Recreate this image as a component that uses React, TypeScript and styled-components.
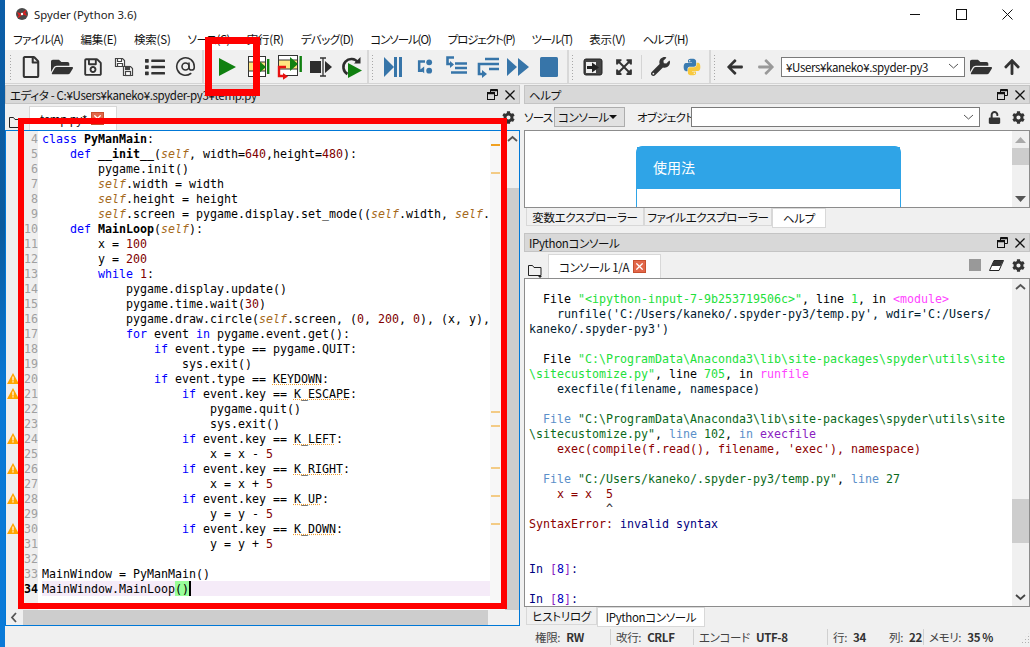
import React from 'react';
import styled, { createGlobalStyle } from 'styled-components';
import { AtSign } from 'lucide-react';
import {
  FaRegFile,
  FaFolderOpen,
  FaRegSave,
  FaList,
  FaExpandArrowsAlt,
  FaWrench,
  FaArrowLeft,
  FaArrowRight,
  FaArrowUp,
  FaUnlock,
  FaCog,
} from 'react-icons/fa';

const UI_FONT = `"Noto Sans CJK JP", "Noto Sans", sans-serif`;
const MONO_FONT = `"DejaVu Sans Mono", "Liberation Mono", monospace`;
const BLUE = '#3775a9';
const DARK = '#333333';

const GlobalStyle = createGlobalStyle`
  html, body {
    margin: 0;
    padding: 0;
    width: 1030px;
    height: 647px;
    overflow: hidden;
    background: #f0f0f0;
  }
`;

const Page = styled.div`
  position: relative;
  display: flex;
  width: 1030px;
  height: 647px;
  overflow: hidden;
  font-family: ${UI_FONT};
  font-size: 11.5px;
  letter-spacing: -0.35px;
  font-feature-settings: 'palt';
  white-space: nowrap;
  color: #111;
`;

const Desktop = styled.div`
  width: 5px;
  background: linear-gradient(#0c5ea8 0%, #0a5a9e 35%, #0a78d4 60%, #0a7ad8 100%);
`;

const Win = styled.div`
  flex: 1;
  display: flex;
  flex-direction: column;
  min-width: 0;
  background: #f0f0f0;
`;

const TitleBar = styled.div`
  height: 28px;
  display: flex;
  align-items: center;
  background: #fff;
  padding-left: 10px;
`;

const TitleText = styled.span`
  margin-left: 5px;
  flex: 1;
  font-family: 'Noto Sans', sans-serif;
  font-size: 11.3px;
  letter-spacing: 0;
  color: #222;
`;

const Caption = styled.div`
  width: 46px;
  height: 28px;
  display: flex;
  align-items: center;
  justify-content: center;
`;

const MenuBar = styled.div`
  height: 22px;
  display: flex;
  align-items: center;
  background: #fff;
  padding-left: 8px;
  gap: 17px;
`;

const MenuItem = styled.span<{ $ls: number }>`
  letter-spacing: ${(p) => p.$ls}px;
`;

const ToolBar = styled.div`
  height: 33px;
  display: flex;
  align-items: center;
  padding-left: 2px;
  border-bottom: 1px solid #d4d4d4;
`;

const ToolGroup = styled.div<{ $w?: number }>`
  display: flex;
  align-items: center;
  height: 100%;
  box-sizing: border-box;
  width: ${(p) => (p.$w ? `${p.$w}px` : 'auto')};
  flex: ${(p) => (p.$w ? 'none' : 1)};
  border-right: ${(p) => (p.$w ? '2px solid #d8d8d8' : 'none')};
`;

const Grip = styled.div`
  width: 3px;
  height: 26px;
  margin: 0 3px 0 2px;
  background-image: radial-gradient(#a8a8a8 0.8px, transparent 1px);
  background-size: 3px 3px;
`;

const ToolSlot = styled.div<{ $w?: number }>`
  width: ${(p) => p.$w ?? 31}px;
  height: 30px;
  display: flex;
  align-items: center;
  justify-content: center;
  color: ${DARK};
  flex: none;
`;

const ToolSep = styled.div`
  width: 1px;
  height: 24px;
  margin: 0 3px 0 2px;
  background: #d4d4d4;
`;

const PathCombo = styled.div`
  width: 184px;
  height: 20px;
  box-sizing: border-box;
  display: flex;
  align-items: center;
  justify-content: space-between;
  padding: 0 5px 0 4px;
  border: 1px solid #7a7a7a;
  background: #fff;
  flex: none;
`;

const Panes = styled.div`
  flex: 1;
  min-height: 0;
  display: flex;
  gap: 4px;
`;

const LeftCol = styled.div`
  width: 515px;
  display: flex;
  flex-direction: column;
  padding: 1px 0;
  box-sizing: border-box;
`;

const RightCol = styled.div`
  flex: 1;
  min-width: 0;
  display: flex;
  flex-direction: column;
  padding-top: 1px;
`;

const DockHeader = styled.div`
  height: 19px;
  flex: none;
  box-sizing: border-box;
  display: flex;
  align-items: center;
  justify-content: space-between;
  padding: 0 4px 0 4px;
  background: #d8d8d8;
  border: 1px solid #c4c4c4;
`;

const DockButtons = styled.div`
  display: flex;
  align-items: center;
  gap: 7px;
`;

const TabRow = styled.div`
  height: 26px;
  flex: none;
  display: flex;
  align-items: flex-end;
  padding-left: 4px;
  gap: 5px;
`;

const TabActions = styled.div`
  margin-left: auto;
  align-self: center;
  display: flex;
  align-items: center;
  gap: 8px;
  padding-right: 5px;
`;

const TopTab = styled.div<{ $w: number }>`
  width: ${(p) => p.$w}px;
  height: 24px;
  box-sizing: border-box;
  display: flex;
  align-items: center;
  gap: 4px;
  padding-left: 10px;
  background: #fff;
  border: 1px solid #d8d8d8;
  border-bottom: none;
`;

const CloseBadge = styled.span`
  width: 13px;
  height: 13px;
  box-sizing: border-box;
  display: inline-flex;
  align-items: center;
  justify-content: center;
  background: #e2674a;
  border: 1px solid #c8502f;
`;

const Editor = styled.div`
  flex: 1;
  min-height: 0;
  display: flex;
  flex-direction: column;
  border: 1px solid #0078d7;
  background: #fff;
`;

const EditorTop = styled.div`
  flex: 1;
  min-height: 0;
  display: flex;
`;

const CodeList = styled.div`
  flex: 1;
  min-width: 0;
  display: flex;
  flex-direction: column;
  font-family: ${MONO_FONT};
  font-size: 11.63px;
  letter-spacing: 0;
  font-feature-settings: normal;
  line-height: 17px;
  color: #000;
`;

const CodeRow = styled.div`
  height: 15px;
  flex: none;
  display: flex;
`;

const FillerRow = styled.div`
  flex: 1;
  display: flex;
`;

const Gutter = styled.div`
  width: 32px;
  flex: none;
  display: flex;
  align-items: flex-start;
  justify-content: flex-end;
  background: #efefef;
  position: relative;
`;

const WarnIcon = styled.svg`
  position: absolute;
  left: 1px;
  top: 2px;
`;

const LineNo = styled.span<{ $current?: boolean }>`
  color: ${(p) => (p.$current ? '#000' : '#a0a0a0')};
  font-weight: ${(p) => (p.$current ? 700 : 400)};
`;

const CodeText = styled.div<{ $current?: boolean }>`
  flex: 1;
  min-width: 0;
  margin-left: 4px;
  overflow: hidden;
  white-space: pre;
  background: ${(p) => (p.$current ? '#f5ebf8' : 'transparent')};
`;

const Kw = styled.span`
  color: #0000ff;
`;

const SelfWord = styled.span`
  color: #a5691c;
  font-style: italic;
`;

const NumWord = styled.span`
  color: #800000;
`;

const DefName = styled.span`
  font-weight: 700;
`;

const Unresolved = styled.span`
  text-decoration: underline dotted #f0a030;
`;

const Bracket = styled.span`
  display: inline-block;
  height: 15px;
  line-height: 17px;
  vertical-align: top;
  background: #99ff99;
`;

const Cursor = styled.span`
  display: inline-block;
  width: 2px;
  height: 15px;
  background: #000;
  vertical-align: top;
`;

const FlagArea = styled.div`
  position: relative;
  width: 15px;
  flex: none;
  background: #f7f7f7;
`;

const FlagMark = styled.div<{ $top: number; $thick?: boolean }>`
  position: absolute;
  left: 1px;
  width: 9px;
  top: ${(p) => p.$top}px;
  height: 2px;
  background: ${(p) => (p.$thick ? '#f0a020' : '#f3cb85')};
`;

const VScroll = styled.div`
  width: 14px;
  flex: none;
  display: flex;
  flex-direction: column;
  align-items: center;
  background: #f0f0f0;
`;

const ScrollEnd = styled.div`
  height: 17px;
  flex: none;
  display: flex;
  align-items: center;
  justify-content: center;
`;

const VThumb = styled.div<{ $h?: number; $mt: number }>`
  width: 100%;
  margin-top: ${(p) => p.$mt}px;
  background: #cdcdcd;
  flex: ${(p) => (p.$h ? 'none' : 1)};
  height: ${(p) => (p.$h ? `${p.$h}px` : 'auto')};
`;

const VSpacer = styled.div`
  flex: 1;
`;

const HScroll = styled.div`
  height: 15px;
  flex: none;
  display: flex;
  align-items: center;
  background: #f0f0f0;
`;

const HEnd = styled.div`
  width: 17px;
  height: 100%;
  display: flex;
  align-items: center;
  justify-content: center;
`;

const HThumb = styled.div`
  width: 465px;
  height: 100%;
  background: #cdcdcd;
`;

const HelpTools = styled.div`
  height: 26px;
  flex: none;
  display: flex;
  align-items: center;
`;

const HelpLabel = styled.span<{ $ml?: number; $w: number }>`
  margin-left: ${(p) => p.$ml ?? 0}px;
  width: ${(p) => p.$w}px;
  flex: none;
  letter-spacing: -0.7px;
`;

const SourceCombo = styled.div`
  width: 71px;
  height: 20px;
  margin-left: 2px;
  flex: none;
  box-sizing: border-box;
  display: flex;
  align-items: center;
  justify-content: space-between;
  padding: 0 8px 0 3px;
  background: #e1e1e1;
  border: 1px solid #adadad;
`;

const TriDown = styled.span`
  width: 0;
  height: 0;
  border-left: 4px solid transparent;
  border-right: 4px solid transparent;
  border-top: 4px solid #111;
`;

const ObjectCombo = styled.div`
  width: 289px;
  height: 20px;
  margin-left: 3px;
  flex: none;
  box-sizing: border-box;
  display: flex;
  align-items: center;
  justify-content: flex-end;
  padding-right: 5px;
  background: #fff;
  border: 1px solid #7a7a7a;
`;

const HelpIcons = styled.div`
  flex: 1;
  display: flex;
  align-items: center;
  justify-content: space-between;
  padding: 0 5px 0 8px;
  color: #333;
`;

const HelpView = styled.div`
  height: 78px;
  flex: none;
  box-sizing: border-box;
  display: flex;
  background: #fff;
  border: 1px solid #8c8c8c;
  overflow: hidden;
`;

const HelpBody = styled.div`
  flex: 1;
  padding: 15px 0 0 111px;
`;

const UsageCard = styled.div`
  width: 265px;
  height: 70px;
  box-sizing: border-box;
  border: 1px solid #2fa4e7;
  border-radius: 6px 6px 0 0;
`;

const UsageHead = styled.div`
  height: 42px;
  box-sizing: border-box;
  display: flex;
  align-items: center;
  padding: 0 0 3px 16px;
  background: #2fa4e7;
  color: #fff;
  font-size: 14px;
  letter-spacing: 0;
`;

const SideScroll = styled.div`
  width: 17px;
  flex: none;
  display: flex;
  flex-direction: column;
  background: #f0f0f0;
`;

const BottomTabs = styled.div`
  height: 20px;
  flex: none;
  display: flex;
  padding-left: 2px;
`;

const BottomTab = styled.div<{ $w: number; $active?: boolean }>`
  width: ${(p) => p.$w}px;
  height: ${(p) => (p.$active ? 20 : 18)}px;
  box-sizing: border-box;
  display: flex;
  align-items: center;
  justify-content: center;
  background: ${(p) => (p.$active ? '#fff' : '#f0f0f0')};
  border: 1px solid #d8d8d8;
  border-top: ${(p) => (p.$active ? '1px solid #d8d8d8' : 'none')};
`;

const ConsoleDock = styled(DockHeader)`
  margin-top: 5px;
`;

const ConsoleActions = styled.div`
  margin-left: auto;
  align-self: center;
  display: flex;
  align-items: center;
  gap: 8px;
  padding-right: 5px;
`;

const StopBox = styled.span`
  width: 12px;
  height: 12px;
  background: #999;
`;

const ConsoleView = styled.div`
  height: 329px;
  flex: none;
  box-sizing: border-box;
  display: flex;
  background: #fff;
  border: 1px solid #8c8c8c;
  overflow: hidden;
`;

const ConsoleText = styled.div`
  flex: 1;
  min-width: 0;
  padding: 13px 0 0 4px;
  font-family: ${MONO_FONT};
  font-size: 11.63px;
  letter-spacing: 0;
  font-feature-settings: normal;
  line-height: 15px;
  white-space: pre;
  overflow: hidden;
`;

const ConsoleLine = styled.div`
  height: 15px;
`;

const Tint = styled.span<{ $c: string }>`
  color: ${(p) => p.$c};
`;

const StatusBar = styled.div`
  height: 20px;
  flex: none;
  display: flex;
  justify-content: flex-end;
  align-items: center;
`;

const StatusCell = styled.div<{ $w: number; $first?: boolean }>`
  width: ${(p) => p.$w}px;
  height: 16px;
  box-sizing: border-box;
  display: flex;
  align-items: center;
  gap: 6px;
  padding-left: ${(p) => (p.$first ? 8 : 5)}px;
  border-left: ${(p) => (p.$first ? 'none' : '1px solid #d0d0d0')};
  color: #444;
`;

const StatusPair = styled.span<{ $w?: number }>`
  display: flex;
  gap: 6px;
  width: ${(p) => (p.$w ? `${p.$w}px` : 'auto')};
`;

const StatusValue = styled.b`
  font-weight: 700;
  color: #333;
`;

const Grippy = styled.div`
  width: 19px;
  height: 16px;
  border-left: 1px solid #d0d0d0;
  background-image: radial-gradient(#b0b0b0 0.8px, transparent 1px);
  background-size: 3px 3px;
  background-position: 10px 6px;
  background-repeat: repeat;
  clip-path: polygon(100% 20%, 100% 100%, 40% 100%);
`;

const Annotation = styled.div<{ $l: number; $t: number; $w: number; $h: number; $b: number }>`
  position: absolute;
  left: ${(p) => p.$l}px;
  top: ${(p) => p.$t}px;
  width: ${(p) => p.$w}px;
  height: ${(p) => p.$h}px;
  box-sizing: border-box;
  border: ${(p) => p.$b}px solid #ff0000;
  pointer-events: none;
`;

const MENUS = [
  { label: 'ファイル(A)', ls: -0.6 },
  { label: '編集(E)', ls: -0.2 },
  { label: '検索(S)', ls: -0.2 },
  { label: 'ソース(C)', ls: -0.6 },
  { label: '実行(R)', ls: -0.2 },
  { label: 'デバッグ(D)', ls: -0.6 },
  { label: 'コンソール(O)', ls: -1.1 },
  { label: 'プロジェクト(P)', ls: -1.1 },
  { label: 'ツール(T)', ls: -1.1 },
  { label: '表示(V)', ls: -0.2 },
  { label: 'ヘルプ(H)', ls: -0.6 },
];

const CODE = [
  'class PyManMain:',
  '    def __init__(self, width=640,height=480):',
  '        pygame.init()',
  '        self.width = width',
  '        self.height = height',
  '        self.screen = pygame.display.set_mode((self.width, self.height))',
  '    def MainLoop(self):',
  '        x = 100',
  '        y = 200',
  '        while 1:',
  '            pygame.display.update()',
  '            pygame.time.wait(30)',
  '            pygame.draw.circle(self.screen, (0, 200, 0), (x, y), 10)',
  '            for event in pygame.event.get():',
  '                if event.type == pygame.QUIT:',
  '                    sys.exit()',
  '                if event.type == KEYDOWN:',
  '                    if event.key == K_ESCAPE:',
  '                        pygame.quit()',
  '                        sys.exit()',
  '                    if event.key == K_LEFT:',
  '                        x = x - 5',
  '                    if event.key == K_RIGHT:',
  '                        x = x + 5',
  '                    if event.key == K_UP:',
  '                        y = y - 5',
  '                    if event.key == K_DOWN:',
  '                        y = y + 5',
  '',
  'MainWindow = PyManMain()',
];

const WARN_LINES = [20, 21, 24, 26, 28, 30];
const FLAGS = [
  { top: 13, thick: true },
  { top: 41 },
  { top: 280 },
  { top: 294 },
  { top: 336 },
  { top: 364 },
  { top: 392 },
];

const C = {
  ink: '#000',
  green: '#22e03a',
  pink: '#ff44ff',
  steel: '#5b8fc9',
  forest: '#0a6a1a',
  purple: '#8a20c0',
  maroon: '#8b0000',
  navy: '#000080',
};

type Seg = [string, string];

const CONSOLE: Seg[][] = [
  [['  File ', C.ink], ['"<ipython-input-7-9b253719506c>"', C.green], [', line ', C.ink], ['1', C.green], [', in ', C.ink], ['<module>', C.pink]],
  [["    runfile('C:/Users/kaneko/.spyder-py3/temp.py', wdir='C:/Users/", '#002030']],
  [["kaneko/.spyder-py3')", '#002030']],
  [],
  [['  File ', C.ink], ['"C:\\ProgramData\\Anaconda3\\lib\\site-packages\\spyder\\utils\\site', C.green]],
  [['\\sitecustomize.py"', C.green], [', line ', C.ink], ['705', C.green], [', in ', C.ink], ['runfile', C.pink]],
  [['    execfile(filename, namespace)', '#002030']],
  [],
  [['  ', C.ink], ['File', C.steel], [' ', C.ink], ['"C:\\ProgramData\\Anaconda3\\lib\\site-packages\\spyder\\utils\\site', C.forest]],
  [['\\sitecustomize.py"', C.forest], [', ', C.ink], ['line', C.steel], [' ', C.ink], ['102', C.forest], [', ', C.ink], ['in', C.steel], [' ', C.ink], ['execfile', C.purple]],
  [["    exec(compile(f.read(), filename, 'exec'), namespace)", C.maroon]],
  [],
  [['  ', C.ink], ['File', C.steel], [' ', C.ink], ['"C:/Users/kaneko/.spyder-py3/temp.py"', C.forest], [', ', C.ink], ['line', C.steel], [' ', C.ink], ['27', C.forest]],
  [['    x = x  5', C.maroon]],
  [['           ^', '#222']],
  [['SyntaxError:', C.maroon], [' invalid syntax', C.navy]],
  [],
  [],
  [['In ', C.navy], ['[', C.purple], ['8', '#0000c0'], [']', C.purple], [':', C.navy]],
  [],
  [['In ', C.navy], ['[', C.purple], ['8', '#0000c0'], [']', C.purple], [':', C.navy]],
];

const TOKEN = /((?<=\b(?:def|class) )\w+)|(\b(?:class|def|while|for|in|if)\b)|(\bself\b)|(\b\d+\b)|(\bK_[A-Z]+\b|\bKEYDOWN\b)/g;

function colorize(line: string): React.ReactNode[] {
  const out: React.ReactNode[] = [];
  let last = 0;
  for (const m of line.matchAll(TOKEN)) {
    const at = m.index ?? 0;
    if (at > last) out.push(line.slice(last, at));
    if (m[1]) out.push(<DefName key={at}>{m[0]}</DefName>);
    else if (m[2]) out.push(<Kw key={at}>{m[0]}</Kw>);
    else if (m[3]) out.push(<SelfWord key={at}>{m[0]}</SelfWord>);
    else if (m[4]) out.push(<NumWord key={at}>{m[0]}</NumWord>);
    else out.push(<Unresolved key={at}>{m[0]}</Unresolved>);
    last = at + m[0].length;
  }
  out.push(line.slice(last));
  return out;
}

const SpyderLogo = () => (
  <svg width="14" height="14" viewBox="0 0 14 14">
    <circle cx="7" cy="7" r="6" fill="#4a4a4a" />
    <path d="M2 5l4 1.5L4 9zM12 9L8 7.5 10 5z" fill="#e02020" />
    <path d="M3 10.5L11 3.5" stroke="#e02020" strokeWidth="1.6" />
    <circle cx="7" cy="7" r="1.2" fill="#fff" />
  </svg>
);

const MinIcon = () => (
  <svg width="11" height="11" viewBox="0 0 11 11"><path d="M0 5.5h10" stroke="#111" /></svg>
);
const MaxIcon = () => (
  <svg width="11" height="11" viewBox="0 0 11 11"><rect x="0.5" y="0.5" width="10" height="10" fill="none" stroke="#111" /></svg>
);
const XIcon = ({ size = 11, color = '#111', w = 1 }: { size?: number; color?: string; w?: number }) => (
  <svg width={size} height={size} viewBox="0 0 11 11"><path d="M.5.5l10 10M10.5.5l-10 10" stroke={color} strokeWidth={w} fill="none" /></svg>
);

const SaveAllIcon = () => (
  <svg width="20" height="20" viewBox="0 0 20 20" fill="none" stroke="#444" strokeWidth="1.2">
    <path d="M1.5 1.5h7l2 2v6h-9z" fill="#fff" />
    <path d="M3.5 1.5v3h4v-3M3.5 9.5v-3h5v3" />
    <path d="M9.5 9.5h7l2 2v7h-9z" fill="#fff" />
    <rect x="11.5" y="9.5" width="4" height="3" fill="#444" />
    <rect x="11.5" y="14.5" width="5" height="4" />
  </svg>
);

const PlayIcon = () => (
  <svg width="17" height="18" viewBox="0 0 17 18"><path d="M0 0l17 9-17 9z" fill="#108010" /></svg>
);

const RunCellIcon = () => (
  <svg width="24" height="24" viewBox="0 0 24 24">
    <rect x="1.5" y="1.5" width="17" height="20" fill="#fff" stroke="#333" />
    <rect x="2" y="7" width="16" height="9" fill="#ffe680" />
    <path d="M2 7h16M2 16h16" stroke="#333" />
    <path d="M11 5l8 7-8 7z" fill="#108010" />
    <rect x="20" y="4" width="2.4" height="15" fill="#108010" />
  </svg>
);

const RunAdvanceIcon = () => (
  <svg width="26" height="26" viewBox="0 0 26 26">
    <rect x="1.5" y="1.5" width="19" height="20" fill="#fff" stroke="#333" />
    <rect x="2" y="6" width="18" height="9" fill="#ffe680" />
    <path d="M2 6h18M2 15h18" stroke="#333" />
    <path d="M13 3l8 7-8 7z" fill="#108010" />
    <rect x="22.5" y="2" width="2.4" height="16" fill="#108010" />
    <path d="M9 13H2v9h5" fill="none" stroke="#e81010" strokeWidth="2.4" />
    <path d="M6 19l5 3.4-5 3.4z" fill="#e81010" />
  </svg>
);

const RunSelectionIcon = () => (
  <svg width="22" height="22" viewBox="0 0 22 22">
    <rect x="0" y="5" width="11" height="12" fill="#2d2d2d" />
    <path d="M15 5l7 6-7 6z" fill="#2d2d2d" />
    <path d="M10 2h6M13 2v18M10 20h6" stroke="#333" strokeWidth="1.3" fill="none" />
  </svg>
);

const DebugIcon = () => (
  <svg width="22" height="22" viewBox="0 0 22 22">
    <path d="M17 6.5A8 8 0 1 0 6.5 18" fill="none" stroke="#2d2d2d" strokeWidth="2.6" />
    <path d="M13 7.5h6.5V1z" fill="#2d2d2d" />
    <path d="M7 7l14 7.5L7 22z" fill="#108010" />
  </svg>
);

const StepIcon = () => (
  <svg width="18" height="20" viewBox="0 0 18 20" fill={BLUE}>
    <path d="M0 0l10 10L0 20z" /><rect x="10" y="0" width="3" height="20" /><rect x="15" y="0" width="3" height="20" />
  </svg>
);

const StepIntoIcon = () => (
  <svg width="16" height="15" viewBox="0 0 18 18" fill="none" stroke={BLUE} strokeWidth="3">
    <path d="M9 3H2v11h4" />
    <path d="M6 10v8l-5-4z" fill={BLUE} stroke="none" transform="translate(2 -1)" />
    <circle cx="14" cy="4" r="3.5" fill={BLUE} stroke="none" />
    <circle cx="14" cy="14" r="3.5" fill={BLUE} stroke="none" />
  </svg>
);

const StepInListIcon = () => (
  <svg width="22" height="22" viewBox="0 0 22 22" fill="none" stroke={BLUE} strokeWidth="2.6">
    <path d="M8 1.5H1.5V8h3" />
    <path d="M4 5v7l4-3.5z" fill={BLUE} stroke="none" />
    <path d="M9 7.5h12M9 12h12M5 16.5h16" />
  </svg>
);

const StepOutListIcon = () => (
  <svg width="22" height="22" viewBox="0 0 22 22" fill="none" stroke={BLUE} strokeWidth="2.6">
    <path d="M8 3h14M8 8h14M12 13h10" />
    <path d="M8 8H2v10h4" />
    <path d="M5 14v8l5-4z" fill={BLUE} stroke="none" />
  </svg>
);

const ContinueIcon = () => (
  <svg width="22" height="18" viewBox="0 0 22 18" fill={BLUE}>
    <path d="M0 0l10 9-10 9zM11 0l11 9-11 9z" />
  </svg>
);

const StopIcon = () => (
  <svg width="18" height="20" viewBox="0 0 18 20"><rect width="18" height="20" rx="1.5" fill={BLUE} /></svg>
);

const ToFileIcon = () => (
  <svg width="20" height="18" viewBox="0 0 20 18">
    <rect x="1" y="1" width="18" height="16" rx="2" fill="#444" stroke="#222" />
    <rect x="3" y="4" width="10" height="11" fill="#eee" />
    <path d="M4 8h5V4.5l7 5-7 5V11H4z" fill="#222" />
  </svg>
);

const PythonIcon = () => (
  <svg width="20" height="20" viewBox="0 0 24 24">
    <path fill="#3b7bb0" d="M11.9 2c-5 0-4.7 2.2-4.7 2.2v2.3h4.8v.7H5.3S2 6.8 2 12s2.9 5 2.9 5h1.7v-2.4s-.1-2.9 2.8-2.9h4.8s2.7 0 2.7-2.6V4.7S17 2 11.9 2zM9.2 3.5a.9.9 0 1 1 0 1.8.9.9 0 0 1 0-1.8z" />
    <path fill="#f8c93e" d="M12.1 22c5 0 4.7-2.2 4.7-2.2v-2.3H12v-.7h6.7s3.3.4 3.3-4.8-2.9-5-2.9-5h-1.7v2.4s.1 2.9-2.8 2.9H9.8s-2.7 0-2.7 2.6v4.4S6.9 22 12.1 22zm2.7-1.5a.9.9 0 1 1 0-1.8.9.9 0 0 1 0 1.8z" />
  </svg>
);

const EraserIcon = () => (
  <svg width="15" height="11" viewBox="0 0 15 11">
    <path d="M5 .5h9.5L10 10.5H.5z" fill="#fff" stroke="#222" />
    <path d="M5 .5h9.5L11.5 6H2.5z" fill="#333" />
  </svg>
);

const Chevron = ({ dir = 'down', color = '#555' }: { dir?: 'down' | 'up' | 'left'; color?: string }) => {
  const d = dir === 'down' ? 'M1 3l4.5 4L10 3' : dir === 'up' ? 'M1 7l4.5-4L10 7' : 'M7 1L3 5.5 7 10';
  return (
    <svg width="11" height="11" viewBox="0 0 11 11">
      <path d={d} fill="none" stroke={color} strokeWidth={dir === 'down' && color === '#555' ? 1 : 1.8} />
    </svg>
  );
};

const Tri = ({ up }: { up?: boolean }) => (
  <svg width="11" height="6" viewBox="0 0 11 6">
    <path d={up ? 'M5.5 0L11 6H0z' : 'M0 0h11L5.5 6z'} fill={up ? '#aaa' : '#555'} />
  </svg>
);

const UndockIcon = () => (
  <svg width="11" height="11" viewBox="0 0 11 11" fill="none" stroke="#111">
    <path d="M3.5 3V.5h7v6H8" />
    <path d="M3.5 1.5h7" strokeWidth="1.5" />
    <rect x="0.5" y="3.5" width="7" height="7" fill="#d8d8d8" />
    <path d="M.5 4.5h7" strokeWidth="1.5" />
  </svg>
);

const TabFolder = () => (
  <svg width="15" height="15" viewBox="0 0 15 15" fill="none" stroke="#222">
    <path d="M.5 12.5v-10h4l1.5 2h7v8z" />
    <path d="M10 13h4l-2 2z" fill="#222" stroke="none" />
  </svg>
);

const GearMenu = ({ size = 13 }: { size?: number }) => <FaCog size={size} color="#333" />;

const Warn = () => (
  <WarnIcon width="12" height="11" viewBox="0 0 12 11">
    <path d="M6 0l6 11H0z" fill="#ffa500" />
    <path d="M5.4 3.5h1.2v4H5.4zM5.4 8.3h1.2v1.3H5.4z" fill="#fff" />
  </WarnIcon>
);

const Dock = ({ title }: { title: string }) => (
  <>
    <span>{title}</span>
    <DockButtons>
      <UndockIcon />
      <XIcon size={10} w={1.4} />
    </DockButtons>
  </>
);

const App: React.FC = () => {
  return (
    <Page>
      <GlobalStyle />
      <Desktop />
      <Win>
        <TitleBar>
          <SpyderLogo />
          <TitleText>Spyder (Python 3.6)</TitleText>
          <Caption><MinIcon /></Caption>
          <Caption><MaxIcon /></Caption>
          <Caption><XIcon /></Caption>
        </TitleBar>

        <MenuBar>
          {MENUS.map((m) => <MenuItem key={m.label} $ls={m.ls}>{m.label}</MenuItem>)}
        </MenuBar>

        <ToolBar>
          <ToolGroup $w={197}>
            <Grip />
            <ToolSlot><FaRegFile size={22} /></ToolSlot>
            <ToolSlot><FaFolderOpen size={22} /></ToolSlot>
            <ToolSlot><FaRegSave size={20} /></ToolSlot>
            <ToolSlot><SaveAllIcon /></ToolSlot>
            <ToolSlot><FaList size={20} /></ToolSlot>
            <ToolSlot><AtSign size={21} strokeWidth={1.8} /></ToolSlot>
          </ToolGroup>
          <ToolGroup $w={165}>
            <Grip />
            <ToolSlot><PlayIcon /></ToolSlot>
            <ToolSlot><RunCellIcon /></ToolSlot>
            <ToolSlot><RunAdvanceIcon /></ToolSlot>
            <ToolSlot><RunSelectionIcon /></ToolSlot>
            <ToolSlot><DebugIcon /></ToolSlot>
          </ToolGroup>
          <ToolGroup $w={200}>
            <Grip />
            <ToolSlot $w={32}><StepIcon /></ToolSlot>
            <ToolSlot $w={32}><StepIntoIcon /></ToolSlot>
            <ToolSlot $w={32}><StepInListIcon /></ToolSlot>
            <ToolSlot $w={30}><StepOutListIcon /></ToolSlot>
            <ToolSlot $w={30}><ContinueIcon /></ToolSlot>
            <ToolSlot><StopIcon /></ToolSlot>
          </ToolGroup>
          <ToolGroup $w={142}>
            <Grip />
            <ToolSlot><ToFileIcon /></ToolSlot>
            <ToolSlot><FaExpandArrowsAlt size={18} /></ToolSlot>
            <ToolSep />
            <ToolSlot><FaWrench size={19} /></ToolSlot>
            <ToolSlot><PythonIcon /></ToolSlot>
          </ToolGroup>
          <ToolGroup>
            <Grip />
            <ToolSlot><FaArrowLeft size={18} /></ToolSlot>
            <ToolSlot><FaArrowRight size={18} color="#999" /></ToolSlot>
            <PathCombo>
              ¥Users¥kaneko¥.spyder-py3
              <Chevron />
            </PathCombo>
            <ToolSlot><FaFolderOpen size={22} /></ToolSlot>
            <ToolSlot><FaArrowUp size={18} /></ToolSlot>
          </ToolGroup>
        </ToolBar>

        <Panes>
          <LeftCol>
            <DockHeader>
              <Dock title="エディタ - C:¥Users¥kaneko¥.spyder-py3¥temp.py" />
            </DockHeader>
            <TabRow>
              <TabFolder />
              <TopTab $w={88}>
                temp.py*
                <CloseBadge><XIcon size={7} color="#fff" w={2} /></CloseBadge>
              </TopTab>
              <TabActions><GearMenu /></TabActions>
            </TabRow>
            <Editor>
              <EditorTop>
                <CodeList>
                  {CODE.map((line, i) => {
                    const n = i + 4;
                    return (
                      <CodeRow key={n}>
                        <Gutter>
                          {WARN_LINES.includes(n) && <Warn />}
                          <LineNo>{n}</LineNo>
                        </Gutter>
                        <CodeText>{colorize(line)}</CodeText>
                      </CodeRow>
                    );
                  })}
                  <CodeRow>
                    <Gutter><LineNo $current>34</LineNo></Gutter>
                    <CodeText $current>MainWindow.MainLoop<Bracket>()</Bracket><Cursor /></CodeText>
                  </CodeRow>
                  <FillerRow><Gutter /></FillerRow>
                </CodeList>
                <FlagArea>
                  {FLAGS.map((f) => <FlagMark key={f.top} $top={f.top} $thick={f.thick} />)}
                </FlagArea>
                <VScroll>
                  <ScrollEnd><Chevron dir="up" /></ScrollEnd>
                  <VThumb $mt={40} />
                </VScroll>
              </EditorTop>
              <HScroll>
                <HEnd><Chevron dir="left" /></HEnd>
                <HThumb />
              </HScroll>
            </Editor>
          </LeftCol>

          <RightCol>
            <DockHeader><Dock title="ヘルプ" /></DockHeader>
            <HelpTools>
              <HelpLabel $w={28}>ソース</HelpLabel>
              <SourceCombo>コンソール<TriDown /></SourceCombo>
              <HelpLabel $ml={12} $w={51}>オブジェクト</HelpLabel>
              <ObjectCombo><Chevron /></ObjectCombo>
              <HelpIcons>
                <FaUnlock size={13} />
                <GearMenu />
              </HelpIcons>
            </HelpTools>
            <HelpView>
              <HelpBody>
                <UsageCard><UsageHead>使用法</UsageHead></UsageCard>
              </HelpBody>
              <SideScroll>
                <ScrollEnd><Tri up /></ScrollEnd>
                <VThumb $h={17} $mt={0} />
                <VSpacer />
                <ScrollEnd><Tri /></ScrollEnd>
              </SideScroll>
            </HelpView>
            <BottomTabs>
              <BottomTab $w={118}>変数エクスプローラー</BottomTab>
              <BottomTab $w={128}>ファイルエクスプローラー</BottomTab>
              <BottomTab $w={54} $active>ヘルプ</BottomTab>
            </BottomTabs>

            <ConsoleDock><Dock title="IPythonコンソール" /></ConsoleDock>
            <TabRow>
              <TabFolder />
              <TopTab $w={113}>
                コンソール 1/A
                <CloseBadge><XIcon size={7} color="#fff" w={2} /></CloseBadge>
              </TopTab>
              <ConsoleActions>
                <StopBox />
                <EraserIcon />
                <GearMenu />
              </ConsoleActions>
            </TabRow>
            <ConsoleView>
              <ConsoleText>
                {CONSOLE.map((segs, i) => (
                  <ConsoleLine key={i}>
                    {segs.map(([t, c], j) => <Tint key={j} $c={c}>{t}</Tint>)}
                  </ConsoleLine>
                ))}
              </ConsoleText>
              <SideScroll>
                <ScrollEnd><Chevron dir="up" /></ScrollEnd>
                <VThumb $h={44} $mt={203} />
                <VSpacer />
                <ScrollEnd><Chevron color="#444" /></ScrollEnd>
              </SideScroll>
            </ConsoleView>
            <BottomTabs>
              <BottomTab $w={71}>ヒストリログ</BottomTab>
              <BottomTab $w={108} $active>IPythonコンソール</BottomTab>
            </BottomTabs>
          </RightCol>
        </Panes>

        <StatusBar>
          <StatusCell $w={83} $first>権限: <StatusValue>RW</StatusValue></StatusCell>
          <StatusCell $w={83}>改行: <StatusValue>CRLF</StatusValue></StatusCell>
          <StatusCell $w={134}>エンコード <StatusValue>UTF-8</StatusValue></StatusCell>
          <StatusCell $w={96}>
            <StatusPair $w={50}>行: <StatusValue>34</StatusValue></StatusPair>
            <StatusPair>列: <StatusValue>22</StatusValue></StatusPair>
          </StatusCell>
          <StatusCell $w={87}>メモリ: <StatusValue>35 %</StatusValue></StatusCell>
          <Grippy />
        </StatusBar>
      </Win>

      <Annotation $l={205} $t={37} $w={55} $h={59} $b={7} />
      <Annotation $l={18} $t={118} $w={489} $h={491} $b={6} />
    </Page>
  );
};

export default App;
